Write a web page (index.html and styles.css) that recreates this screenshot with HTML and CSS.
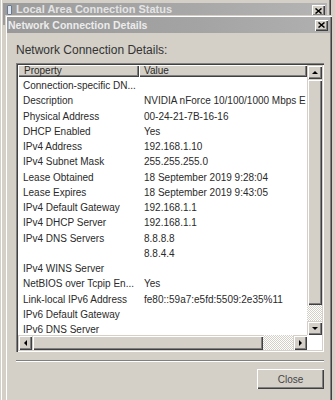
FILE: index.html
```html
<!DOCTYPE html>
<html>
<head>
<meta charset="utf-8">
<link rel="stylesheet" href="styles.css">
</head>
<body>
<div class="backwin">
  <div class="back-title">
    <span class="back-icon"></span>
    <span class="back-text">Local Area Connection Status</span>
    <span class="cap-btn back-x"><svg width="7" height="6" viewBox="0 0 7 6"><path d="M0.5 0.5 L6.5 5.5 M6.5 0.5 L0.5 5.5" stroke="#000" stroke-width="1.5"/></svg></span>
  </div>
</div>

<div class="dialog">
  <div class="titlebar">
    <span class="title">Network Connection Details</span>
    <span class="cap-btn"><svg width="7" height="6" viewBox="0 0 7 6"><path d="M0.5 0.5 L6.5 5.5 M6.5 0.5 L0.5 5.5" stroke="#000" stroke-width="1.5"/></svg></span>
  </div>
  <div class="body">
    <div class="label">Network Connection Details:</div>
    <div class="listbox">
      <div class="list-main">
        <div class="viewport">
          <div class="header">
            <div class="hcell h1">Property</div>
            <div class="hcell h2">Value</div>
          </div>
          <div class="rows">
            <div class="row"><span class="c1">Connection-specific DN...</span><span class="c2"></span></div>
            <div class="row"><span class="c1">Description</span><span class="c2">NVIDIA nForce 10/100/1000 Mbps E</span></div>
            <div class="row"><span class="c1">Physical Address</span><span class="c2">00-24-21-7B-16-16</span></div>
            <div class="row"><span class="c1">DHCP Enabled</span><span class="c2">Yes</span></div>
            <div class="row"><span class="c1">IPv4 Address</span><span class="c2">192.168.1.10</span></div>
            <div class="row"><span class="c1">IPv4 Subnet Mask</span><span class="c2">255.255.255.0</span></div>
            <div class="row"><span class="c1">Lease Obtained</span><span class="c2">18 September 2019 9:28:04</span></div>
            <div class="row"><span class="c1">Lease Expires</span><span class="c2">18 September 2019 9:43:05</span></div>
            <div class="row"><span class="c1">IPv4 Default Gateway</span><span class="c2">192.168.1.1</span></div>
            <div class="row"><span class="c1">IPv4 DHCP Server</span><span class="c2">192.168.1.1</span></div>
            <div class="row"><span class="c1">IPv4 DNS Servers</span><span class="c2">8.8.8.8</span></div>
            <div class="row"><span class="c1"></span><span class="c2">8.8.4.4</span></div>
            <div class="row"><span class="c1">IPv4 WINS Server</span><span class="c2"></span></div>
            <div class="row"><span class="c1">NetBIOS over Tcpip En...</span><span class="c2">Yes</span></div>
            <div class="row"><span class="c1">Link-local IPv6 Address</span><span class="c2">fe80::59a7:e5fd:5509:2e35%11</span></div>
            <div class="row"><span class="c1">IPv6 Default Gateway</span><span class="c2"></span></div>
            <div class="row"><span class="c1">IPv6 DNS Server</span><span class="c2"></span></div>
          </div>
        </div>
        <div class="vscroll">
          <div class="sbtn vbtn"><span class="arr-up"></span></div>
          <div class="thumb vthumb"></div>
          <div class="track vtrack"></div>
          <div class="sbtn vbtn"><span class="arr-down"></span></div>
        </div>
      </div>
      <div class="hrow">
        <div class="hscroll">
          <div class="sbtn hbtn"><span class="arr-left"></span></div>
          <div class="thumb hthumb"></div>
          <div class="track htrack"></div>
          <div class="sbtn hbtn"><span class="arr-right"></span></div>
        </div>
        <div class="corner"></div>
      </div>
    </div>
    <div class="sep"></div>
    <div class="footer">
      <button class="close">Close</button>
    </div>
  </div>
</div>
</body>
</html>
```
FILE: styles.css
```css
* { box-sizing: border-box; }
html, body { margin: 0; padding: 0; }
body {
  width: 335px;
  height: 400px;
  overflow: hidden;
  position: relative;
  background: #d4d0c8;
  font-family: "Liberation Sans", Arial, sans-serif;
  color: #222;
}

/* background window */
.backwin {
  width: 331px;
  height: 400px;
  padding: 3px 4px 0 3px;
  background: #d4d0c8;
  box-shadow: inset 1px 0 #d4d0c8, inset 2px 0 #fff, inset -1px 0 #404040, inset -2px 0 #808080;
}
.back-title {
  height: 22px;
  display: flex;
  align-items: flex-start;
  background: linear-gradient(to right, #9c9c9c, #a8a8a8 60%, #b4b4b4);
  color: #e4e4e4;
  font-weight: bold;
  font-size: 11px;
  line-height: 16px;
}
.back-icon {
  width: 5px;
  height: 10px;
  margin: 2px 0 0 4px;
  background: #dfe6f0;
  border: 1px solid #6a7b90;
  border-radius: 1px;
}
.back-text {
  margin: -2px 0 0 4px;
  flex: 1;
}
.back-x {
  margin-top: 2px;
}

/* caption button */
.cap-btn {
  width: 13px;
  height: 11px;
  margin-right: 2px;
  display: flex;
  align-items: center;
  justify-content: center;
  background: #d4d0c8;
  box-shadow: inset 1px 1px #fff, inset -1px -1px #404040, inset -2px -2px #808080;
}

/* front dialog */
.dialog {
  position: absolute;
  left: 5px;
  top: 15px;
  width: 327px;
  height: 400px;
  padding: 2px;
  background: #d4d0c8;
  box-shadow: inset 1px 1px #d4d0c8, inset 2px 2px #fff, inset -1px -1px #404040, inset -2px -2px #808080;
}
.titlebar {
  height: 16px;
  display: flex;
  align-items: center;
  background: linear-gradient(to right, #999, #a4a4a4 60%, #b0b0b0);
}
.title {
  flex: 1;
  padding-left: 1px;
  color: #ececec;
  font-weight: bold;
  font-size: 10.5px;
  line-height: 16px;
}
.body {
  padding: 10px 6px 0 9px;
}
.label {
  font-size: 12px;
  line-height: 14px;
  color: #333;
}

.listbox {
  margin-top: 6px;
  width: 308px;
  height: 289px;
  padding: 2px;
  background: #fff;
  box-shadow: inset 1px 1px #808080, inset 2px 2px #404040, inset -1px -1px #fff, inset -2px -2px #d4d0c8;
}
.list-main {
  display: flex;
  height: 270px;
}
.viewport {
  width: 289px;
  height: 270px;
  overflow: hidden;
  background: #fff;
}
.header {
  display: flex;
  height: 12px;
  background: #d4d0c8;
  font-size: 10px;
  line-height: 11px;
  color: #2a2a2a;
}
.hcell {
  height: 12px;
  white-space: nowrap;
  box-shadow: inset 1px 1px #fff, inset -1px -1px #404040, inset -2px -2px #808080;
}
.h1 { width: 121px; padding-left: 6px; }
.h2 { flex: 1; padding-left: 5px; }
.rows {
  padding-top: 1px;
}
.row {
  display: flex;
  height: 15.25px;
  font-size: 10px;
  line-height: 15.25px;
  white-space: nowrap;
  color: #2a2a2a;
}
.c1 { width: 121px; padding-left: 5px; flex: none; }
.c2 { padding-left: 5px; }

/* scrollbars */
.sbtn, .thumb {
  background: #d4d0c8;
  box-shadow: inset 1px 1px #d4d0c8, inset 2px 2px #fff, inset -1px -1px #404040, inset -2px -2px #808080;
  display: flex;
  align-items: center;
  justify-content: center;
  flex: none;
}
.track {
  background: repeating-conic-gradient(#fff 0 25%, #d4d0c8 0 50%) 0 0 / 2px 2px;
  flex: none;
}
.vscroll {
  width: 15px;
  height: 270px;
  display: flex;
  flex-direction: column;
}
.vbtn { height: 14px; }
.vthumb { height: 226px; }
.vtrack { height: 16px; }
.hrow {
  display: flex;
  height: 15px;
}
.hscroll {
  width: 289px;
  display: flex;
}
.hbtn { width: 14px; height: 15px; }
.hthumb { width: 231px; }
.htrack { width: 30px; }
.corner { flex: 1; background: #fff; }

.arr-up, .arr-down, .arr-left, .arr-right { width: 0; height: 0; }
.arr-up { border-left: 3px solid transparent; border-right: 3px solid transparent; border-bottom: 3px solid #000; }
.arr-down { border-left: 3px solid transparent; border-right: 3px solid transparent; border-top: 3px solid #000; }
.arr-left { border-top: 3px solid transparent; border-bottom: 3px solid transparent; border-right: 3px solid #000; }
.arr-right { border-top: 3px solid transparent; border-bottom: 3px solid transparent; border-left: 3px solid #000; }

.sep {
  margin-top: 8px;
  width: 308px;
  height: 2px;
  border-top: 1px solid #808080;
  border-bottom: 1px solid #fff;
}
.footer {
  display: flex;
  justify-content: flex-end;
  margin-top: 7px;
}
.close {
  width: 67px;
  height: 20px;
  padding: 0;
  border: none;
  background: #d4d0c8;
  box-shadow: inset 1px 1px #fff, inset -1px -1px #404040, inset -2px -2px #808080;
  font-family: "Liberation Sans", Arial, sans-serif;
  font-size: 10px;
  color: #444;
}
```
